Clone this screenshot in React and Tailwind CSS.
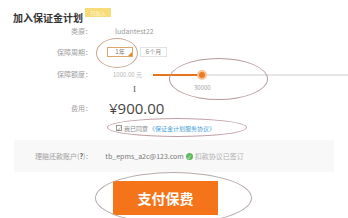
import React from "react";

const font = { fontFamily: '"Noto Sans CJK SC", "Liberation Sans", sans-serif' };

function Row({ label, children, className = "" }) {
  return (
    <div className={`flex items-center ${className}`}>
      <div className="w-[92px] shrink-0 text-right text-[7px] text-[#a0a0a0]">{label}</div>
      {children}
    </div>
  );
}

export default function App() {
  return (
    <div className="relative w-[348px] h-[218px] overflow-hidden bg-white" style={font}>
      {/* title */}
      <div className="flex items-start pl-[13px] pt-[8px] h-[24px]">
        <span className="mt-[4px] text-[10px] leading-[12px] font-bold text-[#333]">加入保证金计划</span>
        <span className="ml-[2px] w-[26px] h-[9px] bg-[#f7dc7a] text-[5px] leading-[9px] text-center text-[#fff6d5]">
          已加入
        </span>
      </div>

      {/* 类原 */}
      <Row label="类原：" className="h-[14px]">
        <span className="ml-[23px] text-[7px] text-[#9a9a9a]">ludantest22</span>
      </Row>

      {/* 保障周期 */}
      <Row label="保障周期：" className="h-[28px]">
        <div className="ml-[15px] flex items-center gap-[7px]">
          <div className="relative w-[26px] h-[10px] border border-[#d9a66b] bg-white text-[6px] leading-[8px] text-center text-[#777]">
            1年
            <span className="absolute right-0 bottom-0 w-0 h-0 border-l-[4px] border-l-transparent border-b-[4px] border-b-[#e58a2c]" />
          </div>
          <div className="w-[27px] h-[10px] border border-[#e2e2e2] text-[6px] leading-[8px] text-center text-[#888]">
            6个月
          </div>
        </div>
      </Row>

      {/* 保障额度 */}
      <Row label="保障额度：" className="h-[20px] -mt-[2px]">
        <span className="ml-[21px] w-[40px] text-[6px] text-[#b5b5b5]">1000.00 元</span>
        <div className="relative flex-1 h-[2px] mt-[2px] bg-[#e6e6e6]">
          <div className="absolute left-0 top-0 h-[2px] w-[48px] bg-[#e8731c]" />
          <div className="absolute left-[44px] top-[-4px] w-[10px] h-[10px] rounded-full bg-[#ee7a22] border-[2px] border-[#f7c79d]" />
          <span className="absolute left-[41px] top-[10px] text-[6px] leading-[8px] text-[#a0a0a0]">30000</span>
        </div>
      </Row>

      <div
        className="h-[10px] pl-[133px] text-[9px] leading-[10px] text-[#555]"
        style={{ fontFamily: '"Liberation Serif", serif' }}
      >
        I
      </div>

      {/* 费用 */}
      <Row label="费用：" className="h-[24px] mt-[2px]">
        <span
          className="ml-[17px] text-[15px] leading-[16px] text-[#444]"
          style={{ fontFamily: '"Open Sans", "Noto Sans CJK SC", sans-serif' }}
        >
          ¥900.00
        </span>
      </Row>

      {/* 协议 */}
      <div className="flex items-center h-[14px] mt-[1px] pl-[116px] text-[6px]">
        <span className="w-[6px] h-[6px] border border-[#999] text-[5px] leading-[5px] text-center text-[#555]">✓</span>
        <span className="ml-[2px] text-[#888]">我已同意</span>
        <span className="ml-[1px] text-[#4a9fd8]">《保证金计划服务协议》</span>
      </div>

      {/* 账户 */}
      <div className="mt-[5px] mx-[14px] h-[32px] bg-[#f8f8f8] flex items-center">
        <span className="ml-[21px] text-[7px] text-[#a0a0a0]">
          理赔还款账户(<span className="font-bold text-[#555]">?</span>)：
        </span>
        <span className="ml-[13px] text-[7px] text-[#777]">tb_epms_a2c@123.com</span>
        <span className="ml-[2px] w-[7px] h-[7px] rounded-full bg-[#5cb85c] text-white text-[5px] leading-[7px] text-center">✓</span>
        <span className="ml-[2px] text-[7px] text-[#b0b0b0]">扣款协议已签订</span>
      </div>

      {/* 按钮 */}
      <div className="mt-[9px] pl-[113px]">
        <div className="w-[105px] h-[34px] bg-[#f5741a] flex items-center justify-center text-[14px] font-bold text-white">
          支付保费
        </div>
      </div>

      {/* annotations */}
      <div className="absolute left-[96px] top-[38px] w-[42px] h-[30px] rounded-[50%] border border-[#c9a68f]" />
      <div className="absolute left-[169px] top-[58px] w-[99px] h-[42px] rounded-[50%] border border-[#b59a9a]" />
      <div className="absolute left-[107px] top-[118px] w-[140px] h-[19px] rounded-[50%] border border-[#c0a0a6]" />
      <div className="absolute left-[95px] top-[172px] w-[157px] h-[52px] rounded-[50%] border border-[#b8aaa8]" />
    </div>
  );
}
